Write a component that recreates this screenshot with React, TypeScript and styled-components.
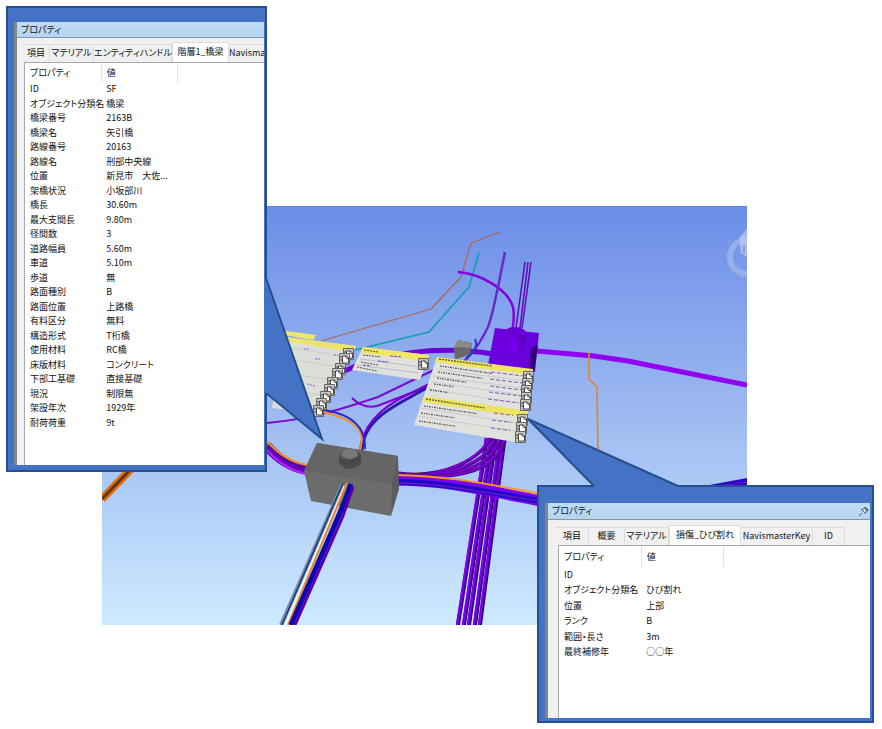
import React, { useState } from "react";
import styled, { createGlobalStyle } from "styled-components";

const GlobalStyle = createGlobalStyle`
  body {
    margin: 0;
    background: #fff;
    color: #111;
    font-family: "Noto Sans CJK JP", "Noto Sans", sans-serif;
    font-feature-settings: "palt";
  }
  * { box-sizing: border-box; }
`;

const Stage = styled.main`
  position: relative;
  padding: 206px 135px 104px 102px;
  overflow: hidden;
`;

const Scene = styled.svg`
  display: block;
  width: 100%;
  height: auto;
`;

const Callout = styled.section<{ $side: "left" | "right" }>`
  position: absolute;
  border: 2px solid #254f8f;
  background: #4472c4;
  ${(p) =>
    p.$side === "left"
      ? "left: 6px; top: 6px; width: 261px; padding: 14px 1px 5px 6px;"
      : "right: 8px; top: 485px; width: 337px; padding: 16px 2px 3px 6px;"}
`;

const Pointer = styled.svg<{ $side: "left" | "right" }>`
  position: absolute;
  ${(p) => (p.$side === "left" ? "left: 100%; top: 268px;" : "left: -13px; top: -70px;")}
`;

const Window = styled.div`
  border-left: 3px solid #858585;
  background: #f0f0f0;
  overflow: hidden;
`;

const TitleBar = styled.header<{ $large: boolean }>`
  display: flex;
  align-items: center;
  justify-content: space-between;
  height: ${(p) => (p.$large ? 17 : 16)}px;
  padding: 0 1px 0 4px;
  border-bottom: 1px solid #8796a6;
  background: linear-gradient(#bfdcf7, #b4d4f1);
`;

const Title = styled.h2`
  margin: 0;
  font-size: 9px;
  line-height: 14px;
  font-weight: 400;
`;

const PinButton = styled.button`
  display: flex;
  padding: 0;
  border: 0;
  background: none;
`;

const Tabs = styled.div<{ $large: boolean }>`
  display: flex;
  align-items: flex-end;
  height: ${(p) => (p.$large ? 25 : 24)}px;
  padding-left: ${(p) => (p.$large ? 8 : 6)}px;
`;

const Tab = styled.button<{ $width: number; $active: boolean }>`
  flex: none;
  width: ${(p) => p.$width}px;
  height: ${(p) => (p.$active ? 20 : 18)}px;
  padding: 0 0 2px;
  border: 1px solid #dcdcdc;
  border-left-width: ${(p) => (p.$active ? 1 : 0)}px;
  border-bottom: 0;
  background: ${(p) => (p.$active ? "#fff" : "#f0f0f0")};
  color: inherit;
  font-family: inherit;
  font-feature-settings: inherit;
  font-size: 9px;
  line-height: 14px;
  white-space: nowrap;
`;

const Panel = styled.div<{ $large: boolean }>`
  margin-left: ${(p) => (p.$large ? 10 : 7)}px;
  padding-bottom: ${(p) => (p.$large ? 58 : 35)}px;
  border: solid #a6a9b0;
  border-width: 1px 0 0 1px;
  background: #fff;
`;

const Properties = styled.table<{ $large: boolean }>`
  border-collapse: collapse;
  table-layout: fixed;
  width: ${(p) => (p.$large ? 165 : 153)}px;
  font-size: 9px;
  line-height: 14px;
  white-space: nowrap;

  th, td { padding: 0 0 0 5px; text-align: left; font-weight: 400; }
  thead tr { height: ${(p) => (p.$large ? 21 : 19)}px; }
  thead th { border-right: 1px solid #e2e2e2; }
  tbody tr { height: ${(p) => (p.$large ? 15 : 14)}px; }
  tbody tr:nth-child(even) { height: ${(p) => (p.$large ? 16 : 15)}px; }
`;

type TabSpec = { label: string; width: number };
type WindowProps = {
  large?: boolean;
  pin?: boolean;
  tabs: TabSpec[];
  initial: number;
  rows: [string, string][];
};

function PropertyWindow({ large = false, pin = false, tabs, initial, rows }: WindowProps) {
  const [active, setActive] = useState(initial);
  return (
    <Window>
      <TitleBar $large={large}>
        <Title>プロパティ</Title>
        {pin && (
          <PinButton aria-label="固定">
            <svg width="11" height="11" viewBox="0 0 11 11">
              <path d="M1 10L4 7M3 3l5 5M4 3c2 1 2-1 3-2l3 3c-1 1-3 1-2 3" fill="#e8eef5" stroke="#556373" />
              <path d="M7 2l3 3" stroke="#556373" strokeWidth="2" />
            </svg>
          </PinButton>
        )}
      </TitleBar>
      <Tabs role="tablist" $large={large}>
        {tabs.map((t, i) => (
          <Tab
            key={t.label}
            role="tab"
            aria-selected={i === active}
            $active={i === active}
            $width={t.width}
            onClick={() => setActive(i)}
          >
            {t.label}
          </Tab>
        ))}
      </Tabs>
      <Panel role="tabpanel" $large={large}>
        <Properties $large={large}>
          <thead>
            <tr>
              <th scope="col">プロパティ</th>
              <th scope="col">値</th>
            </tr>
          </thead>
          <tbody>
            {rows.map(([name, value]) => (
              <tr key={name}>
                <td>{name}</td>
                <td>{value}</td>
              </tr>
            ))}
          </tbody>
        </Properties>
      </Panel>
    </Window>
  );
}

const bridgeRows: [string, string][] = [
  ["ID", "SF"],
  ["オブジェクト分類名", "橋梁"],
  ["橋梁番号", "2163B"],
  ["橋梁名", "矢引橋"],
  ["路線番号", "20163"],
  ["路線名", "刑部中央線"],
  ["位置", "新見市　大佐..."],
  ["架橋状況", "小坂部川"],
  ["橋長", "30.60m"],
  ["最大支間長", "9.80m"],
  ["径間数", "3"],
  ["道路幅員", "5.60m"],
  ["車道", "5.10m"],
  ["歩道", "無"],
  ["路面種別", "B"],
  ["路面位置", "上路橋"],
  ["有料区分", "無料"],
  ["構造形式", "T桁橋"],
  ["使用材料", "RC橋"],
  ["床版材料", "コンクリート"],
  ["下部工基礎", "直接基礎"],
  ["現況", "制限無"],
  ["架設年次", "1929年"],
  ["耐荷荷重", "9t"],
];

const damageRows: [string, string][] = [
  ["ID", ""],
  ["オブジェクト分類名", "ひび割れ"],
  ["位置", "上部"],
  ["ランク", "B"],
  ["範囲・長さ", "3m"],
  ["最終補修年", "○○年"],
];

const bridgeTabs: TabSpec[] = [
  { label: "項目", width: 27 },
  { label: "マテリアル", width: 44 },
  { label: "エンティティハンドル", width: 78 },
  { label: "階層1_橋梁", width: 57 },
  { label: "Navisma", width: 36 },
];

const damageTabs: TabSpec[] = [
  { label: "項目", width: 33 },
  { label: "概要", width: 36 },
  { label: "マテリアル", width: 44 },
  { label: "損傷_ひび割れ", width: 72 },
  { label: "NavismasterKey", width: 72 },
  { label: "ID", width: 32 },
];

function DocIcon({ x, y }: { x: number; y: number }) {
  return (
    <g transform={`translate(${x - 5} ${y - 6})`}>
      <path d="M.5.5h10v11H.5z" fill="#c9c9c4" stroke="#666" />
      <path d="M3.5 3h4l2 2v5h-6z" fill="#fff" stroke="#222" strokeWidth=".8" />
      <path d="M7 3v2.5h2.5M2 3v6" fill="none" stroke="#222" strokeWidth=".8" strokeDasharray="2 1" />
    </g>
  );
}

const leftIcons = [[348, 354], [344, 359], [340, 369], [337, 374], [332, 383], [329, 390], [325, 397], [321, 404], [318, 411]];
const rightIcons = [[528, 377], [527, 384], [526, 391], [526, 398], [525, 405], [522, 420], [521, 428], [520, 437]];
const noteLines = [[440, 366, 52], [438, 372, 45], [437, 378, 30], [434, 384, 20], [430, 390, 18], [424, 406, 53], [421, 413, 34], [419, 421, 36]];
const noteLinks = [[491, 372, 34], [490, 379, 34], [490, 386, 33], [489, 392, 32], [488, 399, 31], [494, 413, 19], [492, 420, 19], [491, 428, 19]];

function ModelScene() {
  return (
    <Scene viewBox="102 206 645 419" role="img" aria-label="3Dモデル">
      <defs>
        <linearGradient id="sky" x1="0" y1="0" x2="0" y2="1">
          <stop offset="0" stopColor="#6b8de8" />
          <stop offset=".5" stopColor="#9dbaf1" />
          <stop offset="1" stopColor="#cdebff" />
        </linearGradient>
        <linearGradient id="cylinder">
          <stop offset="0" stopColor="#6700d6" />
          <stop offset=".5" stopColor="#7a00f4" />
          <stop offset="1" stopColor="#4b00a0" />
        </linearGradient>
        <radialGradient id="dome" cx=".4" cy=".25">
          <stop offset="0" stopColor="#858585" />
          <stop offset="1" stopColor="#474747" />
        </radialGradient>
      </defs>
      <path d="M102 206h645v419H102z" fill="url(#sky)" />
      <path d="M102 206.5h645" stroke="#6385dc" />

      {/* view cube and compass */}
      <g fill="none">
        <path d="M747 240a16 16 0 1 0 0 34" stroke="#a3b9ed" strokeWidth="6" opacity=".7" />
        <path d="M747 229l-8 9 2 15 6 4z" fill="#b9caee" opacity=".75" />
        <path d="M728 243l4-4M733 272l7 5M744 246v7" stroke="#8a9dcc" strokeWidth="2" />
      </g>

      <g fill="none" strokeLinejoin="round">
        {/* upper pipes */}
        <path d="M321 341l110-32 30-32 10-34 29-11" stroke="#af674d" strokeWidth="1.3" />
        <path d="M355 350l74-18 40-45 10-35" stroke="#10a4ae" strokeWidth="1.8" />
        <path d="M458 272c24 2 50 18 55 35q2 12-1 24" stroke="#8500df" strokeWidth="2.5" />
        <path d="M505 252c-7 34-11 59-17 75-8 16-16 30-34 42" stroke="#6a2bc4" strokeWidth="2.5" />
        <path d="M525 262l-9 66M528 262l-8 66M531 262l-9 66" stroke="#5e10b5" strokeWidth="1.6" />
        <path d="M340 373c40-20 98-28 153-19" stroke="#6e00d8" strokeWidth="5" />
        <path d="M537 351l57 5 34 5 119 24" stroke="#9200f2" strokeWidth="5" />
        <path d="M475 339c3 7 0 12-9 19" stroke="#203ecf" strokeWidth="2" />
        <path d="M589 352v27l8 8 1 69" stroke="#e38424" strokeWidth="1.6" />
        {/* middle pipes */}
        <path d="M267 423c45-4 78-15 111-26l64-31" stroke="#7c0bd0" strokeWidth="2" />
        <path d="M352 398c7 7 16 10 25 8l55-21" stroke="#8500d9" strokeWidth="2" />
        <path d="M362 452c0-29 27-43 43-52l27-15" stroke="#2b19a7" strokeWidth="3" />
        <path d="M360 450c3-27 25-44 45-54l28-14" stroke="#7a00cf" strokeWidth="2" />
        <path d="M320 411c23 6 40 12 42 28l-2 12" stroke="#f5921e" strokeWidth="2" />
        <path d="M324 410c26 4 42 16 41 39" stroke="#2b26d0" strokeWidth="2" />
        {/* left bundle */}
        <path d="M267 446q17 20 40 24" stroke="#6a00bb" strokeWidth="10" />
        <path d="M267 441q17 20 40 24" stroke="#f4921b" strokeWidth="2" />
        <path d="M267 444q18 20 40 24" stroke="#272078" strokeWidth="1" />
        <path d="M267 450q18 20 40 24" stroke="#b222ff" strokeWidth="2" />
        {/* curved bundle and lower trunk */}
        {[0, 6, 11, 17, 22].map((d) => (
          <React.Fragment key={d}>
            <path d={`M${487 + d * 0.8} 438L${458 + d} 625`} stroke="#360078" strokeWidth="4" />
            <path d={`M${486 + d * 0.8} 438L${457 + d} 625`} stroke="#7d00ed" strokeWidth="2.5" />
          </React.Fragment>
        ))}
        {[0, 5, 10, 15].map((d) => (
          <React.Fragment key={d}>
            <path d={`M${491 + d} 436c-7 ${22 + d} -48 ${44 - d / 5}-95 ${37 + d / 3}`} stroke="#3e087d" strokeWidth="3.5" />
            <path d={`M${490 + d} 436c-7 ${22 + d} -48 ${44 - d / 5}-95 ${37 + d / 3}`} stroke="#8000d4" strokeWidth="2" />
          </React.Fragment>
        ))}
        {/* right bundle */}
        <path d="M395 480c45 0 80 8 145 21" stroke="#7d00ed" strokeWidth="11" />
        <path d="M395 482c45 0 80 8 145 19" stroke="#1c0acb" strokeWidth="6" />
        <path d="M395 483c45 0 80 8 145 18" stroke="#7410bf" strokeWidth="1.5" />
        <path d="M395 475c45 1 75 5 145 19" stroke="#ff9720" strokeWidth="2" />
        <path d="M102 499l31-32" stroke="#e46c0a" strokeWidth="8" />
        <path d="M102 499l31-32" stroke="#5f3612" strokeWidth="3" />
      </g>
      <path d="M704 486l43-8v8z" fill="#2d09c8" />
      <path d="M720 486l27-4" stroke="#8500e6" />

      {/* purple pier */}
      <path d="M495 328l44 5-4 39-47-7z" fill="#6b00df" />
      <path d="M531 348l7-3-4 28-5-1z" fill="#36007d" />
      <path d="M504 333v17q10 6 19 0l3-17z" fill="url(#cylinder)" />
      <ellipse cx="515" cy="333" rx="11" ry="6" fill="#6900d5" />
      <path d="M458 340l14 3-2 11-15 6-1-11z" fill="#686868" />
      <path d="M458 340l14 3-3 5-15-1z" fill="#8a8a87" />

      {/* note sheets */}
      <path d="M286 331l30 4-3 5-29-5z" fill="#efe66e" />
      <path d="M285 337l71 9-38 67-46-5z" fill="#deded9" />
      <path d="M285 337l71 9-3 6-68-11z" fill="#eee467" />
      <path d="M285 347l63 10M285 359l55 8M285 373l46 7M285 390l38 5" stroke="#cacad2" />
      <path d="M304 349h6M334 355h4M315 359h6M307 384l8 2" stroke="#796cd1" strokeDasharray="2 1" />
      <path d="M363 347l66 8-9 25-68-10z" fill="#e0e0dc" />
      <path d="M363 347l66 8-1 6-67-8z" fill="#f0e663" />
      <path d="M360 359l61 8M357 365l62 8" stroke="#bdbdca" />
      <path d="M364 350l14 2M363 355l18 2M361 362l17 3M357 367l20 4" stroke="#555" strokeDasharray="2 1" />
      <path d="M390 356l12 1M378 361l10 1M363 365l8 1" stroke="#8440ca" strokeDasharray="3 1" />
      <path d="M437 357l96 13-13 73-106-18z" fill="#e1e1de" />
      <path d="M437 357l96 12-2 6-96-13zM425 396l103 15-1 7-104-16z" fill="#eee462" />
      <path d="M439 359l53 7M426 399l59 9" stroke="#67622c" strokeWidth="1.4" strokeDasharray="2 1" />
      <path d="M436 369l88 12M433 376l89 12M431 382l90 13M428 389l90 14M421 408l97 15M418 416l97 15" stroke="#cacacd" />
      {noteLines.map(([x, y, w]) => (
        <path key={y} d={`M${x} ${y}l${w} ${w / 7}`} stroke="#555" strokeWidth="1.2" strokeDasharray="2 1 1 1" />
      ))}
      {noteLinks.map(([x, y, w]) => (
        <path key={y} d={`M${x} ${y}l${w} ${w / 8}`} stroke="#8656be" strokeDasharray="4 2" />
      ))}
      {leftIcons.map(([x, y]) => <DocIcon key={y} x={x} y={y} />)}
      {rightIcons.map(([x, y]) => <DocIcon key={y} x={x} y={y} />)}
      <DocIcon x={423} y={364} />

      {/* concrete block */}
      <path d="M317 443l81 13-7 60-80-15-7-30z" fill="#6c6c6c" />
      <path d="M317 443l81 13-6 28-88-13z" fill="#656565" />
      <path d="M398 456l1 33-8 27 1-32z" fill="#5b5b5b" />
      <path d="M339 456v8q10 10 22 0v-9z" fill="#4b4b4b" />
      <ellipse cx="350" cy="457" rx="11" ry="8" fill="url(#dome)" />
      <ellipse cx="350" cy="454" rx="8" ry="5" fill="#777" />

      {/* front bundle */}
      <g fill="none">
        <path d="M343 483l-62 142" stroke="#738cbd" strokeWidth="4" />
        <path d="M343 483l-61 142" stroke="#29375f" strokeWidth="1.5" />
        <path d="M345 486l-59 139" stroke="#e2f8ff" strokeWidth="3" />
        <path d="M347 483l-59 142" stroke="#ed8424" strokeWidth="2" />
        <path d="M351 484l-7 20-53 121" stroke="#0b05c4" strokeWidth="5" />
        <path d="M350 484l-60 141" stroke="#151273" />
        <path d="M353 487l-10 29-48 109" stroke="#5a00a2" strokeWidth="3" />
      </g>
    </Scene>
  );
}

export default function App() {
  return (
    <>
      <GlobalStyle />
      <Stage>
        <ModelScene />
        <Callout $side="left">
          <PropertyWindow tabs={bridgeTabs} initial={3} rows={bridgeRows} />
          <Pointer $side="left" width="62" height="168">
            <path d="M0 2h1l56 161L1 117H0z" fill="#4472c4" />
            <path d="M1 2l56 161L1 117" fill="none" stroke="#254f8f" strokeWidth="2" />
          </Pointer>
        </Callout>
        <Callout $side="right">
          <PropertyWindow large pin tabs={damageTabs} initial={3} rows={damageRows} />
          <Pointer $side="right" width="155" height="71">
            <path d="M2 2l66 67v2h84v-2z" fill="#4472c4" />
            <path d="M68 69L2 2l150 67" fill="none" stroke="#254f8f" strokeWidth="2" />
          </Pointer>
        </Callout>
      </Stage>
    </>
  );
}
